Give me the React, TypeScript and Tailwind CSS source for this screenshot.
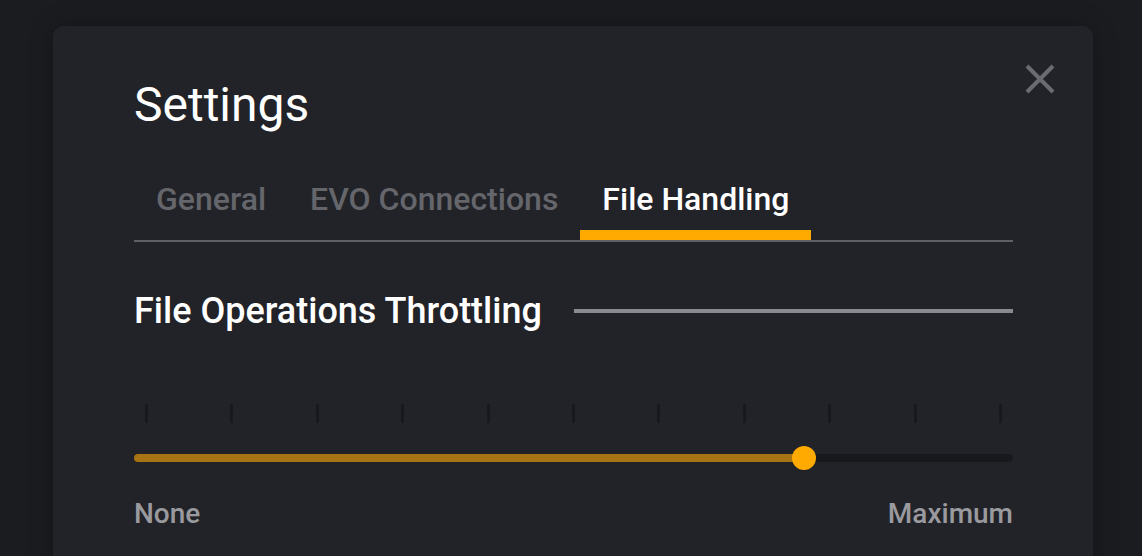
import { useState } from 'react';

const TABS = ['General', 'EVO Connections', 'File Handling'];
const TICKS = 11;

export default function App() {
  const [active, setActive] = useState(2);
  const [value] = useState(0.77);

  return (
    <div className="h-[556px] overflow-hidden bg-[#1b1c20] pt-[26px] pl-[53px] pr-[49px] font-['Roboto',sans-serif]">
      <div className="relative h-[600px] rounded-[10px] bg-[#222328] pl-[81px] pr-[80px] pt-[55px] shadow-[0_0_24px_rgba(0,0,0,0.25)]">
        {/* Close */}
        <button className="absolute right-[38px] top-[38px] h-[30px] w-[30px] text-[#6a6b70]">
          <svg viewBox="0 0 30 30" width="30" height="30" fill="none" stroke="currentColor" strokeWidth="4">
            <path d="M2 2 L28 28 M28 2 L2 28" />
          </svg>
        </button>

        <h1 className="text-[48px] font-normal leading-none text-white">Settings</h1>

        {/* Tabs */}
        <div className="mt-[54px] flex border-b-2 border-[#5f6064]">
          {TABS.map((tab, i) => (
            <button
              key={tab}
              onClick={() => setActive(i)}
              className={`relative px-[22px] pb-[25px] text-[32px] font-medium leading-none ${i === active ? 'text-white' : 'text-[#65666b]'}`}
            >
              {tab}
              {i === active && <span className="absolute bottom-0 left-0 right-0 h-[10px] bg-[#ffaa00]" />}
            </button>
          ))}
        </div>

        {/* Section header */}
        <div className="mt-[51px] flex items-center gap-[32px]">
          <h2 className="text-[36px] font-medium leading-none text-white">File Operations Throttling</h2>
          <div className="h-[4px] flex-1 bg-[#8b8b8f]" />
        </div>

        {/* Slider */}
        <div className="mt-[75px]">
          <div className="flex justify-between px-[11px]">
            {Array.from({ length: TICKS }).map((_, i) => (
              <span key={i} className="h-[19px] w-[3px] bg-[#18191c]" />
            ))}
          </div>
          <div className="relative mt-[31px] h-[8px] rounded-full bg-[#18191c]">
            <div
              className="absolute left-0 top-0 h-full rounded-full bg-[#a87414]"
              style={{ width: `calc(12px + (100% - 24px) * ${value})` }}
            />
            <div
              className="absolute top-1/2 h-[24px] w-[24px] -translate-x-1/2 -translate-y-1/2 rounded-full bg-[#ffaa00]"
              style={{ left: `calc(12px + (100% - 24px) * ${value})` }}
            />
          </div>
          <div className="mt-[38px] flex justify-between text-[28px] font-medium leading-none text-[#9a9a9e]">
            <span>None</span>
            <span>Maximum</span>
          </div>
        </div>
      </div>
    </div>
  );
}
